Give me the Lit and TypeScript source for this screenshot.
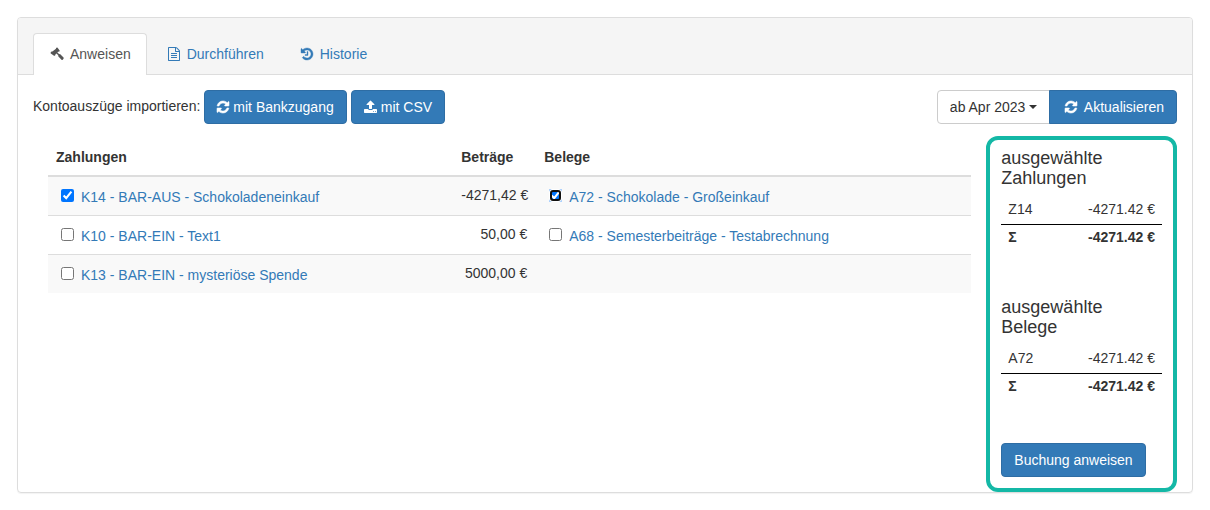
import { LitElement, html, css, svg } from "lit";
import { customElement, property, state } from "lit/decorators.js";

type Icon = { box: string; width: number; weight: number; path: string };

const ICONS: Record<string, Icon> = {
  refresh: {
    box: "128 0 1536 1792",
    width: 12,
    weight: 70,
    path: "M1639 1056q0 5-1 7-64 268-268 434.5t-478 166.5q-146 0-282.5-55t-243.5-157l-129 129q-19 19-45 19t-45-19-19-45v-448q0-26 19-45t45-19h448q26 0 45 19t19 45-19 45l-137 137q71 66 161 102t187 36q134 0 250-65t186-179q11-17 53-117 8-23 30-23h192q13 0 22.5 9.5t9.5 22.5zm25-800v448q0 26-19 45t-45 19h-448q-26 0-45-19t-19-45 19-45l138-138q-148-137-349-137-134 0-250 65t-186 179q-11 17-53 117-8 23-30 23h-199q-13 0-22.5-9.5t-9.5-22.5v-7q65-268 270-434.5t480-166.5q146 0 284 55.5t245 156.5l130-129q19-19 45-19t45 19 19 45z",
  },
  upload: {
    box: "64 0 1664 1792",
    width: 13,
    weight: 0,
    path: "M1344 1472q0-26-19-45t-45-19-45 19-19 45 19 45 45 19 45-19 19-45zm256 0q0-26-19-45t-45-19-45 19-19 45 19 45 45 19 45-19 19-45zm128-224v320q0 40-28 68t-68 28h-1472q-40 0-68-28t-28-68v-320q0-40 28-68t68-28h427q21 56 70.5 92t110.5 36h256q61 0 110.5-36t70.5-92h427q40 0 68 28t28 68zm-325-648q-17 40-59 40h-256v448q0 26-19 45t-45 19h-256q-26 0-45-19t-19-45v-448h-256q-42 0-59-40-17-39 14-69l448-448q18-19 45-19t45 19l448 448q31 30 14 69z",
  },
  history: {
    box: "128 0 1536 1792",
    width: 12,
    weight: 50,
    path: "M1664 896q0 156-61 298t-164 245-245 164-298 61q-172 0-327-72.5t-264-204.5q-7-10-6.5-22.5t8.5-20.5l137-138q10-9 25-9 16 2 23 12 73 95 179 147t225 52q104 0 198.5-40.5t163.5-109.5 109.5-163.5 40.5-198.5-40.5-198.5-109.5-163.5-163.5-109.5-198.5-40.5q-98 0-188 35.5t-160 101.5l137 138q31 30 14 69-17 40-59 40h-448q-26 0-45-19t-19-45v-448q0-42 40-59 39-17 69 14l130 129q107-101 244.5-156.5t284.5-55.5q156 0 298 61t245 164 164 245 61 298zm-640-288v448q0 14-9 23t-23 9h-320q-14 0-23-9t-9-23v-64q0-14 9-23t23-9h224v-352q0-14 9-23t23-9h64q14 0 23 9t9 23z",
  },
  gavel: {
    box: "0 0 14 14",
    width: 14,
    weight: 0,
    path: "M.6 5.9Q.6 5.4 1 5L1.6 4.5Q2 4.3 2.4 4.6L6 1.7Q5.8 1.2 6.2 .9L6.8 .5Q7.2 .3 7.6 .7L9.6 3.4Q9.9 3.9 9.5 4.2L9 4.7Q8.6 4.9 8.2 4.6L7.4 5.4 9.3 7.2Q9.8 6.9 10.3 7.3L13.5 10.6Q14 11.2 13.5 11.8L12.7 12.7Q12.1 13.2 11.5 12.7L8.4 9.4Q8 8.9 8.3 8.3L6.4 6.4 5.4 7.3Q5.7 7.7 5.4 8.1L4.8 8.7Q4.4 9 4 8.7L.8 6.5Q.6 6.3 .6 5.9Z",
  },
  file: {
    box: "128 0 1536 1792",
    width: 12,
    weight: 0,
    path: "M1596 380q28 28 48 76t20 88v1152q0 40-28 68t-68 28h-1344q-40 0-68-28t-28-68v-1600q0-40 28-68t68-28h896q40 0 88 20t76 48zm-444-244v376h376q-10-29-22-41l-313-313q-12-12-41-22zm384 1528v-1024h-416q-40 0-68-28t-28-68v-416h-768v1536h1280zm-1024-864q0-14 9-23t23-9h704q14 0 23 9t9 23v64q0 14-9 23t-23 9h-704q-14 0-23-9t-9-23v-64zm736 224q14 0 23 9t9 23v64q0 14-9 23t-23 9h-704q-14 0-23-9t-9-23v-64q0-14 9-23t23-9h704zm0 256q14 0 23 9t9 23v64q0 14-9 23t-23 9h-704q-14 0-23-9t-9-23v-64q0-14 9-23t23-9h704z",
  },
};

@customElement("fa-icon")
class FaIcon extends LitElement {
  @property() name = "refresh";

  static styles = css`
    :host {
      display: inline-flex;
      justify-content: center;
      flex: none;
    }
    :host([fixed]) {
      width: 18px;
    }
    svg {
      display: block;
      height: 14px;
      fill: currentColor;
      stroke: currentColor;
      overflow: visible;
    }
  `;

  render() {
    const icon = ICONS[this.name];
    return html`<svg viewBox=${icon.box} width=${icon.width} height="14" stroke-width=${icon.weight} aria-hidden="true">
      ${svg`<path d=${icon.path}></path>`}
    </svg>`;
  }
}

type Entry = { id: string; text: string; checked: boolean };
type Row = { payment: Entry; amount: string; receipt?: Entry };

@customElement("app-root")
class AppRoot extends LitElement {
  @state() rows: Row[] = [
    {
      payment: { id: "k14", text: "K14 - BAR-AUS - Schokoladeneinkauf", checked: true },
      amount: "-4271,42 €",
      receipt: { id: "a72", text: "A72 - Schokolade - Großeinkauf", checked: true },
    },
    {
      payment: { id: "k10", text: "K10 - BAR-EIN - Text1", checked: false },
      amount: "50,00 €",
      receipt: { id: "a68", text: "A68 - Semesterbeiträge - Testabrechnung", checked: false },
    },
    {
      payment: { id: "k13", text: "K13 - BAR-EIN - mysteriöse Spende", checked: false },
      amount: "5000,00 €",
    },
  ];

  static styles = css`
    :host {
      display: block;
      padding: 17px;
      font: 14px/20px "Liberation Sans", Arial, sans-serif;
      color: #333;
      background: #fff;
    }
    *,
    *::before,
    *::after {
      box-sizing: border-box;
    }
    a {
      color: #337ab7;
      text-decoration: none;
    }
    .panel {
      border: 1px solid #ddd;
      border-radius: 4px;
      box-shadow: 0 1px 1px rgba(0, 0, 0, 0.05);
    }
    .heading {
      padding: 15px 15px 0;
      background: #f5f5f5;
      border-bottom: 1px solid #ddd;
      border-radius: 3px 3px 0 0;
    }
    .tabs {
      display: flex;
      gap: 3px;
      margin: 0 0 -1px;
      padding: 0;
      list-style: none;
    }
    .tab {
      display: flex;
      align-items: center;
      gap: 4px;
      padding: 10px 15px 11px 14px;
      border: 1px solid transparent;
      border-bottom: 0;
      border-radius: 4px 4px 0 0;
    }
    .tab.active {
      color: #555;
      background: #fff;
      border-color: #ddd;
    }
    .body {
      padding: 15px 15px 0;
    }
    .toolbar {
      display: flex;
      justify-content: space-between;
      margin-bottom: 12px;
    }
    .import {
      display: flex;
      align-items: center;
      gap: 4px;
    }
    .import span {
      padding-bottom: 2px;
    }
    .btn {
      display: inline-flex;
      align-items: center;
      gap: 4px;
      padding: 6px 12px;
      font: inherit;
      color: #fff;
      background: #337ab7;
      border: 1px solid #2e6da4;
      border-radius: 4px;
      white-space: nowrap;
      cursor: pointer;
    }
    .period {
      display: flex;
    }
    .picker {
      position: relative;
      display: flex;
    }
    .picker select {
      appearance: none;
      margin: 0 -1px 0 0;
      padding: 6px 22px 6px 12px;
      font: inherit;
      color: #333;
      background: #fff;
      border: 1px solid #ccc;
      border-radius: 4px 0 0 4px;
    }
    .caret {
      position: absolute;
      top: 15px;
      right: 12px;
      border-top: 4px solid #333;
      border-left: 4px solid transparent;
      border-right: 4px solid transparent;
      pointer-events: none;
    }
    .period .btn {
      position: relative;
      border-radius: 0 4px 4px 0;
    }
    .columns {
      display: grid;
      grid-template-columns: 5fr 1fr;
    }
    .main {
      padding: 3px 15px;
    }
    table {
      width: 100%;
      border-collapse: separate;
      border-spacing: 0;
    }
    .list {
      table-layout: fixed;
    }
    .col-payment {
      width: 44%;
    }
    .col-amount {
      width: 82px;
    }
    .list th {
      padding: 8px;
      text-align: left;
      border-bottom: 2px solid #ddd;
    }
    .list td {
      padding: 8px;
      vertical-align: top;
    }
    .list tr + tr td {
      border-top: 1px solid #ddd;
    }
    .list tbody tr:nth-child(odd) {
      background: #f9f9f9;
    }
    .list .amount {
      padding: 8px 9px 8px 7px;
      text-align: right;
      white-space: nowrap;
    }
    .list th.amount {
      text-align: left;
    }
    .entry {
      display: flex;
      align-items: flex-start;
      gap: 7px;
      padding-left: 5px;
    }
    .entry input {
      flex: none;
      width: 13px;
      height: 13px;
      margin: 4px 0 0;
    }
    .entry input:focus {
      outline: 5px auto #101010;
      outline-offset: -2px;
    }
    .entry label {
      padding-top: 2px;
    }
    .summary {
      display: flex;
      flex-direction: column;
      align-items: flex-start;
      gap: 43px;
      padding: 5px 11px 11px;
      border: 4px solid #14b8a6;
      border-radius: 12px;
    }
    .selection {
      width: 100%;
    }
    .selection h4 {
      margin: 3px 0 10px;
      font-size: 18px;
      line-height: 20px;
      font-weight: 400;
    }
    .sums th,
    .sums td {
      padding: 1px 7px 5px;
      text-align: left;
      font-weight: 400;
    }
    .sums td {
      text-align: right;
      white-space: nowrap;
    }
    .sums .total > * {
      padding: 2px 7px 4px;
      border-top: 1px solid #000;
      font-weight: 700;
    }
  `;

  firstUpdated() {
    this.renderRoot.querySelector<HTMLInputElement>("#a72")?.focus();
  }

  renderEntry(entry: Entry) {
    return html`<div class="entry">
      <input type="checkbox" id=${entry.id} .checked=${entry.checked} />
      <label for=${entry.id}><a href="#${entry.id}">${entry.text}</a></label>
    </div>`;
  }

  renderSelection(title: string, key: string) {
    return html`<section class="selection">
      <h4>ausgewählte ${title}</h4>
      <table class="sums">
        <tbody>
          <tr><th scope="row">${key}</th><td>-4271.42 €</td></tr>
          <tr class="total"><th scope="row">Σ</th><td>-4271.42 €</td></tr>
        </tbody>
      </table>
    </section>`;
  }

  render() {
    return html`<div class="panel">
      <nav class="heading">
        <ul class="tabs">
          <li><a class="tab active" href="#anweisen"><fa-icon name="gavel" fixed></fa-icon>Anweisen</a></li>
          <li><a class="tab" href="#durchfuehren"><fa-icon name="file" fixed></fa-icon>Durchführen</a></li>
          <li><a class="tab" href="#historie"><fa-icon name="history" fixed></fa-icon>Historie</a></li>
        </ul>
      </nav>
      <div class="body">
        <div class="toolbar">
          <div class="import">
            <span>Kontoauszüge importieren:</span>
            <button class="btn" type="button"><fa-icon name="refresh"></fa-icon>mit Bankzugang</button>
            <button class="btn" type="button"><fa-icon name="upload"></fa-icon>mit CSV</button>
          </div>
          <div class="period">
            <div class="picker">
              <select aria-label="Zeitraum"><option>ab Apr 2023</option></select>
              <span class="caret"></span>
            </div>
            <button class="btn" type="button"><fa-icon name="refresh" fixed></fa-icon>Aktualisieren</button>
          </div>
        </div>
        <div class="columns">
          <div class="main">
            <table class="list">
              <colgroup><col class="col-payment" /><col class="col-amount" /><col /></colgroup>
              <thead>
                <tr><th scope="col">Zahlungen</th><th class="amount" scope="col">Beträge</th><th scope="col">Belege</th></tr>
              </thead>
              <tbody>
                ${this.rows.map(
                  (row) => html`<tr>
                    <td>${this.renderEntry(row.payment)}</td>
                    <td class="amount">${row.amount}</td>
                    <td>${row.receipt ? this.renderEntry(row.receipt) : ""}</td>
                  </tr>`,
                )}
              </tbody>
            </table>
          </div>
          <aside class="summary">
            ${this.renderSelection("Zahlungen", "Z14")} ${this.renderSelection("Belege", "A72")}
            <button class="btn" type="button">Buchung anweisen</button>
          </aside>
        </div>
      </div>
    </div>`;
  }
}
